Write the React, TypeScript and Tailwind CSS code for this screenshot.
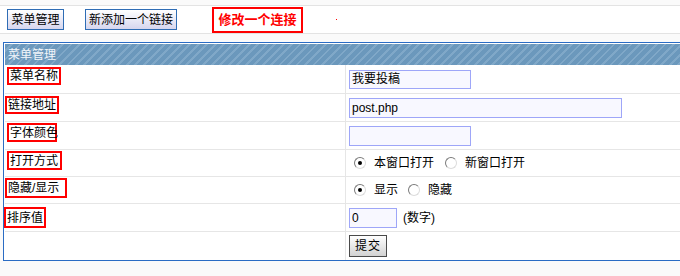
import React from "react";

function Radio({ checked }: { checked?: boolean }) {
  return (
    <span className="w-[12px] h-[12px] rounded-full border border-t-[#7a7a7a] border-l-[#7a7a7a] border-r-[#dcdcdc] border-b-[#dcdcdc] bg-white flex items-center justify-center shrink-0">
      {checked ? <span className="w-[4px] h-[4px] rounded-full bg-black" /> : null}
    </span>
  );
}

function Label({ text, cls }: { text: string; cls: string }) {
  return (
    <span className={"border-2 border-[#ff0000] flex items-center pl-px whitespace-nowrap " + cls}>
      {text}
    </span>
  );
}

const inputCls =
  "border border-[#9ea6f8] bg-[#f8f8ff] flex items-center pl-[2px] text-[12px] text-black";

export default function App() {
  return (
    <div className="w-[680px] h-[276px] overflow-hidden bg-[#fafafa] text-[12px] text-black font-['Liberation_Sans','Noto_Sans_CJK_SC',sans-serif] leading-none">
      <div className="mt-[5px] h-[29px] border-y border-[#e3e3e3] bg-white flex items-center pl-[7px]">
        <div className="w-[57px] h-[21px] border border-[#2f6db5] bg-gradient-to-b from-white to-[#d6d6ee] flex items-center justify-center">
          菜单管理
        </div>
        <div className="ml-[21px] w-[92px] h-[21px] border border-[#2f6db5] bg-gradient-to-b from-white to-[#d6d6ee] flex items-center justify-center">
          新添加一个链接
        </div>
        <div className="ml-[35px] w-[91px] h-[26px] border-2 border-[#ff0000] flex items-center justify-center text-[13px] font-bold text-[#ff0000]">
          修改一个连接
        </div>
        <span className="ml-[33px] w-px h-px bg-[#ff0000]" />
      </div>

      <div className="mt-[8px] ml-[3px] border-l border-t border-b border-[#2a6cc4] bg-white pl-px pt-px">
        <div className="h-[21px] flex items-center pl-[3px] text-[#f2f6fa] text-[12px] bg-[repeating-linear-gradient(135deg,#6b98bc_0px,#6b98bc_4px,#80a8c8_4px,#80a8c8_6px)]">
          菜单管理
        </div>

        <div className="h-[29px] flex border-b border-[#e6e6e6]">
          <div className="w-[341px] border-r border-[#e6e6e6] flex items-start">
            <Label text="菜单名称" cls="ml-[2px] mt-[2px] w-[54px] h-[18px]" />
          </div>
          <div className="flex-1 flex items-center pl-[3px]">
            <div className={inputCls + " w-[122px] h-[19px]"}>我要投稿</div>
          </div>
        </div>

        <div className="h-[28px] flex border-b border-[#e6e6e6]">
          <div className="w-[341px] border-r border-[#e6e6e6] flex items-start">
            <Label text="链接地址" cls="ml-0 mt-[2px] w-[54px] h-[18px]" />
          </div>
          <div className="flex-1 flex items-center pl-[3px]">
            <div className={inputCls + " w-[273px] h-[20px]"}>post.php</div>
          </div>
        </div>

        <div className="h-[28px] flex border-b border-[#e6e6e6]">
          <div className="w-[341px] border-r border-[#e6e6e6] flex items-start">
            <Label text="字体颜色" cls="ml-[2px] mt-px w-[50px] h-[19px]" />
          </div>
          <div className="flex-1 flex items-center pl-[3px]">
            <div className={inputCls + " w-[122px] h-[20px]"}></div>
          </div>
        </div>

        <div className="h-[27px] flex border-b border-[#e6e6e6]">
          <div className="w-[341px] border-r border-[#e6e6e6] flex items-start">
            <Label text="打开方式" cls="ml-[2px] mt-px w-[55px] h-[19px]" />
          </div>
          <div className="flex-1 flex items-center pl-[8px]">
            <Radio checked />
            <span className="ml-[8px]">本窗口打开</span>
            <span className="ml-[11px]">
              <Radio />
            </span>
            <span className="ml-[8px]">新窗口打开</span>
          </div>
        </div>

        <div className="h-[27px] flex border-b border-[#e6e6e6]">
          <div className="w-[341px] border-r border-[#e6e6e6] flex items-start">
            <Label text="隐藏/显示" cls="ml-0 mt-px w-[62px] h-[20px]" />
          </div>
          <div className="flex-1 flex items-center pl-[8px]">
            <Radio checked />
            <span className="ml-[8px]">显示</span>
            <span className="ml-[10px]">
              <Radio />
            </span>
            <span className="ml-[8px]">隐藏</span>
          </div>
        </div>

        <div className="h-[28px] flex border-b border-[#e6e6e6]">
          <div className="w-[341px] border-r border-[#e6e6e6] flex items-start">
            <Label text="排序值" cls="-ml-px mt-[3px] w-[42px] h-[21px]" />
          </div>
          <div className="flex-1 flex items-center pl-[3px]">
            <div className={inputCls + " w-[48px] h-[20px]"}>0</div>
            <span className="ml-[6px]">(数字)</span>
          </div>
        </div>

        <div className="h-[28px] flex">
          <div className="w-[341px] border-r border-[#e6e6e6]" />
          <div className="flex-1 flex items-center pl-[3px]">
            <div className="w-[38px] h-[22px] border border-[#4a4a4a] bg-gradient-to-b from-white to-[#d2d2d2] flex items-center justify-center tracking-[1px]">
              提交
            </div>
          </div>
        </div>
      </div>
    </div>
  );
}
